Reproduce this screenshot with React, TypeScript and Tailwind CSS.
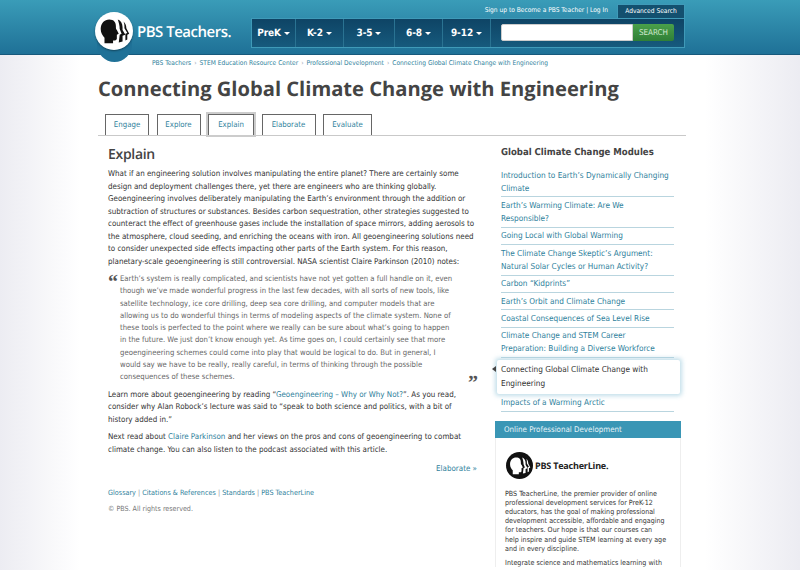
import React from 'react';

const GRADES = [
  { label: 'PreK', w: 'w-[44px]' },
  { label: 'K-2', w: 'w-[48px]' },
  { label: '3-5', w: 'w-[51px]' },
  { label: '6-8', w: 'w-[48px]' },
  { label: '9-12', w: 'w-[48px]' },
];

const TABS = [
  { label: 'Engage', w: 'w-[44px]' },
  { label: 'Explore', w: 'w-[44px]' },
  { label: 'Explain', w: 'w-[46px]' },
  { label: 'Elaborate', w: 'w-[54px]' },
  { label: 'Evaluate', w: 'w-[49px]' },
];

// line breaks follow the module list in the sidebar
const MODULES = [
  'Introduction to Earth\u2019s Dynamically Changing\nClimate',
  'Earth\u2019s Warming Climate: Are We\nResponsible?',
  'Going Local with Global Warming',
  'The Climate Change Skeptic\u2019s Argument:\nNatural Solar Cycles or Human Activity?',
  'Carbon \u201CKidprints\u201D',
  'Earth\u2019s Orbit and Climate Change',
  'Coastal Consequences of Sea Level Rise',
  'Climate Change and STEM Career\nPreparation: Building a Diverse Workforce',
];

const PbsHead = ({ size, dark }: { size: number; dark?: boolean }) => {
  const ink = dark ? '#fff' : '#111';
  return (
    <svg width={size} height={size} viewBox="0 0 40 40">
      <circle cx="20" cy="20" r="20" fill={dark ? '#111' : '#fff'} />
      <path
        d="M6 18c0-6 4-10 9-10 5 0 7 3 7 7 0 2 0 3 1 4l2 4-2 1v4c0 1-1 2-2 2h-2v3h-9v-6c-2-2-4-5-4-9z"
        fill={ink}
      />
      <path d="M24 8c3 1 5 4 5 8l0 3 3 5-3 1 0 6-4 1 1-8 2-1-2-5c0-4-1-7-2-10z" fill={ink} />
      <path d="M30 10c2 2 3 4 3 7l3 6-2 1 0 5-2 1 0-7 2-1-3-5c0-3 0-5-1-7z" fill={ink} />
    </svg>
  );
};

const Header = () => (
  <header className="relative h-[55px] border-b border-[#17597c] bg-gradient-to-b from-[#3a9cb8] to-[#1f7197]">
    <div className="absolute left-[95px] top-[12px] z-10 h-[38px] w-[38px]">
      <div className="absolute left-[2px] top-[18px] h-[32px] w-[35px] rounded-b-[18px] bg-[#1f7197]" />
      <div className="relative rounded-full shadow-[0_1px_2px_rgba(0,0,0,0.4)]">
        <PbsHead size={38} />
      </div>
    </div>
    <div className="flex h-full pl-[137px]">
      <div className="w-[114px] pt-[22px] text-[15px] leading-[20px] font-semibold tracking-[-0.5px] text-white [font-family:'Open_Sans',sans-serif]">
        PBS Teachers.
      </div>
      <div className="flex w-[434px] flex-col pt-[4px]">
        <div className="flex h-[14px] items-center justify-end text-[6.6px] text-white">
          <span className="mr-[9px]">Sign up to Become a PBS Teacher | Log In</span>
          <span className="flex h-[14px] w-[68px] items-center justify-center border-x-[1.5px] border-t-[1.5px] border-[#3f9ab8] bg-[#13506f] text-[6.6px]">
            Advanced Search
          </span>
        </div>
        <div className="flex h-[30px] items-stretch border-[1.5px] border-[#3f9ab8] bg-gradient-to-b from-[#0e4465] to-[#165a7d]">
          {GRADES.map((g) => (
            <div
              key={g.label}
              className={`${g.w} flex items-center justify-center gap-[3px] border-r border-[#2a7392] text-[10px] font-bold tracking-[-0.1px] text-white`}
            >
              {g.label}
              <span className="mt-[1px] h-0 w-0 border-x-[3px] border-t-[3px] border-x-transparent border-t-white" />
            </div>
          ))}
          <div className="ml-[10px] mt-[5px] h-[17px] w-[132px] rounded-l-[2px] border border-[#ccc] bg-white" />
          <div className="mt-[5px] flex h-[17px] w-[41px] items-center justify-center rounded-r-[2px] bg-gradient-to-b from-[#4aa04a] to-[#2f7f37] text-[8px] text-[#cfe8cf]">
            SEARCH
          </div>
        </div>
      </div>
    </div>
  </header>
);

const Breadcrumb = () => (
  <div className="flex gap-[3px] pl-[152px] pt-[3px] text-[6.6px] leading-[10px] text-[#2f7f9c]">
    <span>PBS Teachers</span>
    <span className="text-gray-400">›</span>
    <span>STEM Education Resource Center</span>
    <span className="text-gray-400">›</span>
    <span>Professional Development</span>
    <span className="text-gray-400">›</span>
    <span>Connecting Global Climate Change with Engineering</span>
  </div>
);

const Tabs = () => (
  <div className="mt-[11px] flex h-[22px] items-end gap-[7.5px] border-b border-[#c9c9c9] pl-[7px]">
    {TABS.map((t) => (
      <div
        key={t.label}
        className={
          t.label === 'Explain'
            ? `${t.w} flex h-[21px] items-center justify-center border border-b-0 border-[#666] bg-white text-[7.8px] text-[#2f7f9c] shadow-[0_0_0_2px_#ccc]`
            : `${t.w} flex h-[21px] items-center justify-center border border-b-0 border-[#666] bg-white text-[7.8px] text-[#2f7f9c]`
        }
      >
        {t.label}
      </div>
    ))}
  </div>
);

const Article = () => (
  <div className="w-[369px] whitespace-nowrap text-[7.95px] leading-[12.5px] text-[#333]">
    <h2 className="text-[14px] leading-[20px] font-semibold tracking-[-0.3px] text-[#444] [font-family:'Open_Sans',sans-serif]">Explain</h2>
    <p className="mt-[3px]">
      What if an engineering solution involves manipulating the entire planet? There are certainly some<br />
      design and deployment challenges there, yet there are engineers who are thinking globally.<br />
      Geoengineering involves deliberately manipulating the Earth’s environment through the addition or<br />
      subtraction of structures or substances. Besides carbon sequestration, other strategies suggested to<br />
      counteract the effect of greenhouse gases include the installation of space mirrors, adding aerosols to<br />
      the atmosphere, cloud seeding, and enriching the oceans with iron. All geoengineering solutions need<br />
      to consider unexpected side effects impacting other parts of the Earth system. For this reason,<br />
      planetary-scale geoengineering is still controversial. NASA scientist Claire Parkinson (2010) notes:
    </p>
    <blockquote className="relative mt-[5px] pl-[12px] text-[7.7px] leading-[12.3px] text-[#666]">
      <span className="absolute left-0 top-[-1px] text-[20px] leading-[20px] font-bold text-[#555] [font-family:'Liberation_Serif',serif]">“</span>
      Earth’s system is really complicated, and scientists have not yet gotten a full handle on it, even<br />
      though we’ve made wonderful progress in the last few decades, with all sorts of new tools, like<br />
      satellite technology, ice core drilling, deep sea core drilling, and computer models that are<br />
      allowing us to do wonderful things in terms of modeling aspects of the climate system. None of<br />
      these tools is perfected to the point where we really can be sure about what’s going to happen<br />
      in the future. We just don’t know enough yet. As time goes on, I could certainly see that more<br />
      geoengineering schemes could come into play that would be logical to do. But in general, I<br />
      would say we have to be really, really careful, in terms of thinking through the possible<br />
      consequences of these schemes.
      <span className="absolute right-[-1px] bottom-[-5px] text-[20px] leading-[12px] font-bold text-[#555] [font-family:'Liberation_Serif',serif]">”</span>
    </blockquote>
    <p className="mt-[5px]">
      Learn more about geoengineering by reading “<span className="text-[#2f7f9c]">Geoengineering – Why or Why Not?</span>”. As you read,<br />
      consider why Alan Robock’s lecture was said to “speak to both science and politics, with a bit of<br />
      history added in.”
    </p>
    <p className="mt-[5px]">
      Next read about <span className="text-[#2f7f9c]">Claire Parkinson</span> and her views on the pros and cons of geoengineering to combat<br />
      climate change. You can also listen to the podcast associated with this article.
    </p>
    <p className="mt-[7px] text-right text-[#2f7f9c]">Elaborate »</p>
    <p className="mt-[11px] text-[7.2px] text-[#2f7f9c]">
      Glossary <span className="text-[#999]">|</span> Citations &amp; References <span className="text-[#999]">|</span> Standards <span className="text-[#999]">|</span> PBS TeacherLine
    </p>
    <p className="mt-[4px] text-[7.1px] text-[#777]">© PBS. All rights reserved.</p>
  </div>
);

const Sidebar = () => (
  <aside className="w-[186px] text-[8.2px] leading-[13px]">
    <h3 className="pl-[6px] text-[9.5px] leading-[16px] font-bold whitespace-nowrap text-[#444]">Global Climate Change Modules</h3>
    <ul className="mt-[6px] pl-[6px]">
      {MODULES.map((m) => (
        <li key={m} className="w-[173px] border-b border-[#b9d5df] py-[1.7px] whitespace-pre-line text-[#2f7f9c]">
          {m}
        </li>
      ))}
    </ul>
    <div className="relative z-10 mt-[2px] ml-[2px] w-[183px] rounded-[2px] bg-white pt-[2px] pb-[4px] pl-[4px] leading-[14px] text-[#333] shadow-[0_0_4px_2px_rgba(170,210,225,0.7)]">
      <span className="absolute left-[-5px] top-[6px] h-0 w-0 border-y-[3px] border-r-[4px] border-y-transparent border-r-[#444]" />
      Connecting Global Climate Change with<br />Engineering
    </div>
    <div className="ml-[6px] w-[173px] border-b border-[#b9d5df] pt-[1.5px] pb-[2px] text-[#2f7f9c]">Impacts of a Warming Arctic</div>
    <div className="mt-[9px] flex h-[17px] items-center bg-[#3a96b5] pl-[9px] text-[7.9px] text-[#e8f4f8]">
      Online Professional Development
    </div>
    <div className="border-x border-[#eee] px-[9px] pt-[14px] text-[#333]">
      <div className="flex items-center gap-[2px] pl-[1px]">
        <PbsHead size={27} dark />
        <span className="text-[9px] font-bold tracking-[-0.2px] text-[#222] [font-family:'Open_Sans',sans-serif]">PBS TeacherLine.</span>
      </div>
      <p className="mt-[10px] whitespace-nowrap text-[7.1px] leading-[9.2px]">
        PBS TeacherLine, the premier provider of online<br />
        professional development services for PreK-12<br />
        educators, has the goal of making professional<br />
        development accessible, affordable and engaging<br />
        for teachers. Our hope is that our courses can<br />
        help inspire and guide STEM learning at every age<br />
        and in every discipline.
      </p>
      <p className="mt-[5px] whitespace-nowrap text-[7.1px] leading-[9.2px]">Integrate science and mathematics learning with</p>
    </div>
  </aside>
);

export default function App() {
  return (
    <div className="h-[570px] overflow-hidden bg-[linear-gradient(to_right,#ececf2,#ffffff_80px,#ffffff_705px,#ececf2)] [text-rendering:geometricPrecision] [font-family:'DejaVu_Sans_Condensed','DejaVu_Sans',sans-serif]">
      <Header />
      <Breadcrumb />
      <main className="ml-[98px] w-[588px]">
        <h1 className="mt-[5px] text-[20.15px] leading-[30px] font-bold whitespace-nowrap text-[#444] [font-family:'Open_Sans',sans-serif]">
          Connecting Global Climate Change with Engineering
        </h1>
        <Tabs />
        <div className="mt-[9px] flex pl-[10px]">
          <Article />
          <div className="ml-[18px]">
            <Sidebar />
          </div>
        </div>
      </main>
    </div>
  );
}
